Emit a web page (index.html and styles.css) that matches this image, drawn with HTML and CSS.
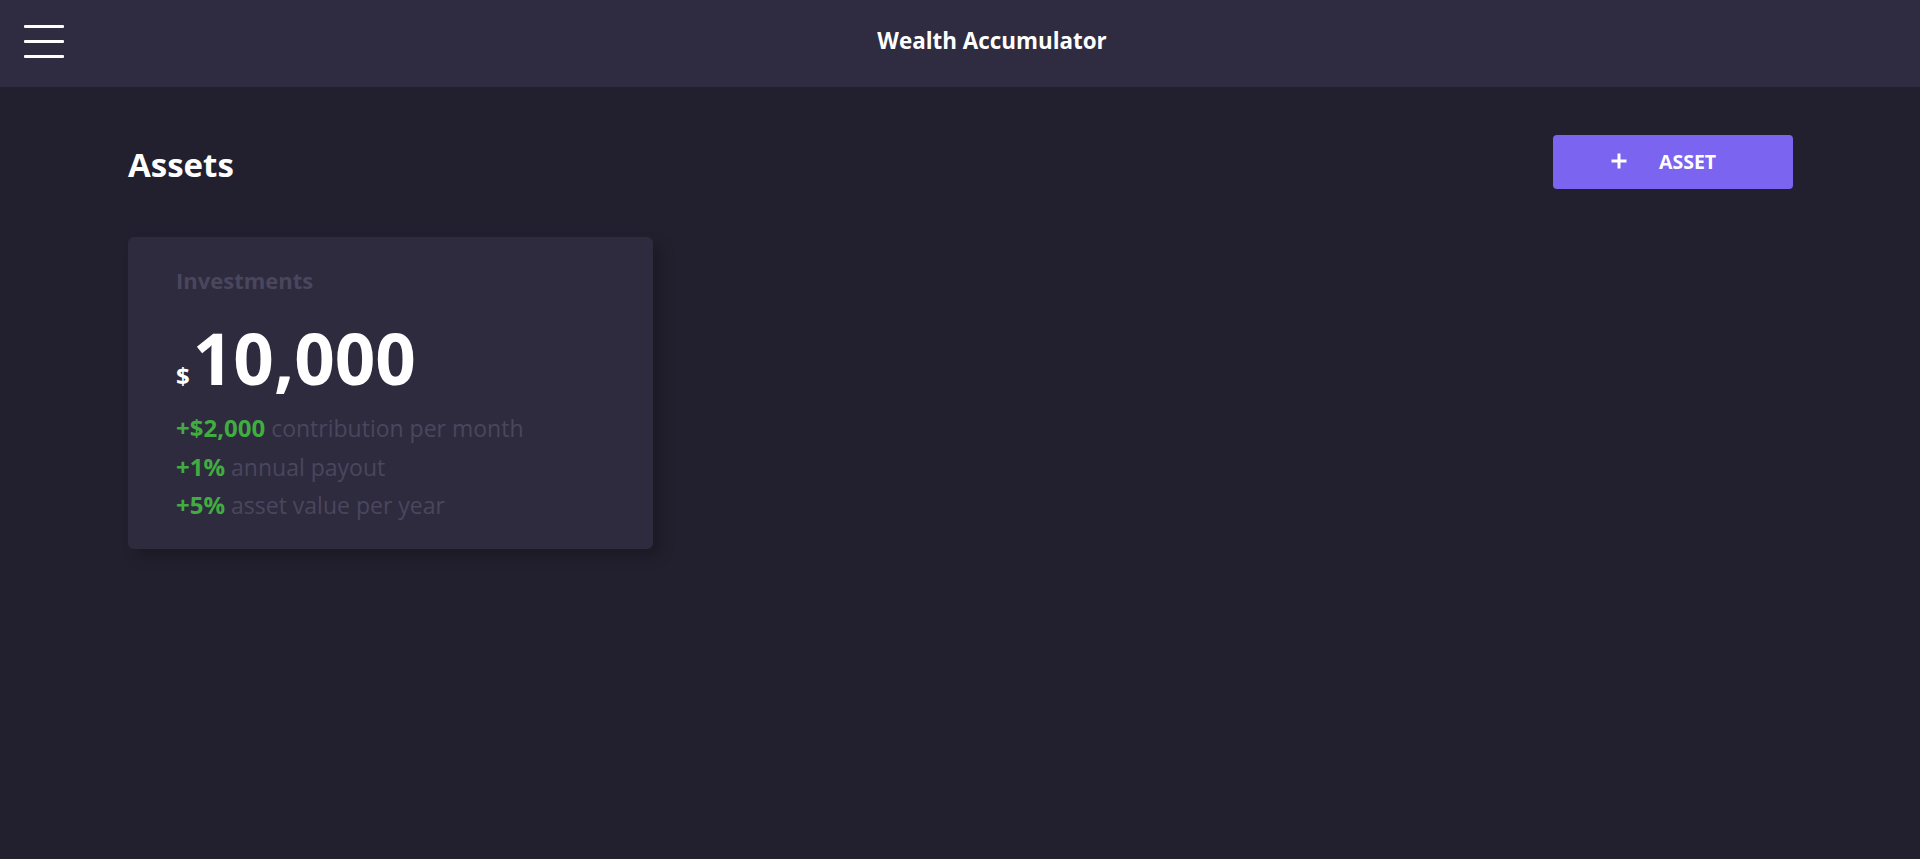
FILE: index.html
```html
<!DOCTYPE html>
<html lang="en">
<head>
<meta charset="utf-8">
<title>Wealth Accumulator</title>
<link rel="stylesheet" href="styles.css">
</head>
<body>
<header class="topbar">
  <button class="menu-btn" aria-label="Menu">
    <span class="bar"></span><span class="bar"></span><span class="bar"></span>
  </button>
  <div class="app-title">Wealth Accumulator</div>
</header>
<main class="content">
  <div class="page-head">
    <h1 class="page-title">Assets</h1>
    <button class="add-btn">
      <svg class="plus" width="18" height="18" viewBox="0 0 18 18" aria-hidden="true">
        <path d="M9 1.5v15M1.5 9h15" stroke="#ffffff" stroke-width="3" stroke-linecap="butt" fill="none"/>
      </svg>
      <span class="add-label">ASSET</span>
    </button>
  </div>
  <section class="cards">
    <article class="card">
      <div class="card-label">Investments</div>
      <div class="amount"><span class="currency">$</span><span class="value">10,000</span></div>
      <ul class="stats">
        <li><span class="gain">+$2,000</span> contribution per month</li>
        <li><span class="gain">+1%</span> annual payout</li>
        <li><span class="gain">+5%</span> asset value per year</li>
      </ul>
    </article>
  </section>
</main>
</body>
</html>
```

FILE: styles.css
```css
* { box-sizing: border-box; }

html, body {
  margin: 0;
  padding: 0;
  height: 100%;
}

body {
  background: #22202e;
  font-family: "Open Sans", "Noto Sans", sans-serif;
  color: #ffffff;
}

.topbar {
  height: 87px;
  background: #2f2c41;
  display: flex;
  align-items: center;
  padding-left: 24px;
}

.menu-btn {
  width: 40px;
  padding: 0;
  border: 0;
  background: transparent;
  display: flex;
  flex-direction: column;
  gap: 12px;
  cursor: pointer;
  margin-top: -5px;
}

.bar {
  display: block;
  width: 40px;
  height: 3px;
  background: #ffffff;
  border-radius: 1px;
}

.app-title {
  flex: 1;
  text-align: center;
  font-weight: 700;
  font-size: 22.4px;
  line-height: 1;
  margin-top: -5px;
}

.content {
  padding: 48px 127px 0 128px;
}

.page-head {
  display: flex;
  align-items: center;
  justify-content: space-between;
  height: 54px;
}

.page-title {
  margin: 0;
  font-size: 33px;
  font-weight: 700;
  line-height: 1;
  margin-top: 4px;
}

.add-btn {
  width: 240px;
  height: 54px;
  border: 0;
  border-radius: 4px;
  background: #7b64f0;
  color: #ffffff;
  display: flex;
  align-items: center;
  padding: 0 0 0 57px;
  gap: 31px;
  font-family: inherit;
  cursor: pointer;
}

.plus {
  display: block;
  margin-top: -2px;
}

.add-label {
  font-size: 19.5px;
  font-weight: 700;
  line-height: 1;
}

.cards {
  margin-top: 48px;
  display: flex;
}

.card {
  width: 525px;
  height: 312px;
  background: #2e2b3f;
  border-radius: 6px;
  box-shadow: 8px 8px 14px rgba(0, 0, 0, 0.22);
  padding: 31px 48px 0 48px;
}

.card-label {
  font-size: 22px;
  font-weight: 700;
  line-height: 24px;
  color: #4a465e;
}

.amount {
  margin-top: 31px;
  display: flex;
  align-items: baseline;
  line-height: 70px;
  height: 70px;
}

.currency {
  font-size: 24px;
  font-weight: 700;
  margin-right: 3px;
}

.value {
  font-size: 71px;
  font-weight: 700;
}

.stats {
  list-style: none;
  margin: 16px 0 0;
  padding: 0;
  font-size: 23px;
  line-height: 38.5px;
  color: #4a465e;
}

.gain {
  color: #41ad41;
  font-weight: 700;
  font-size: 24px;
}
```
